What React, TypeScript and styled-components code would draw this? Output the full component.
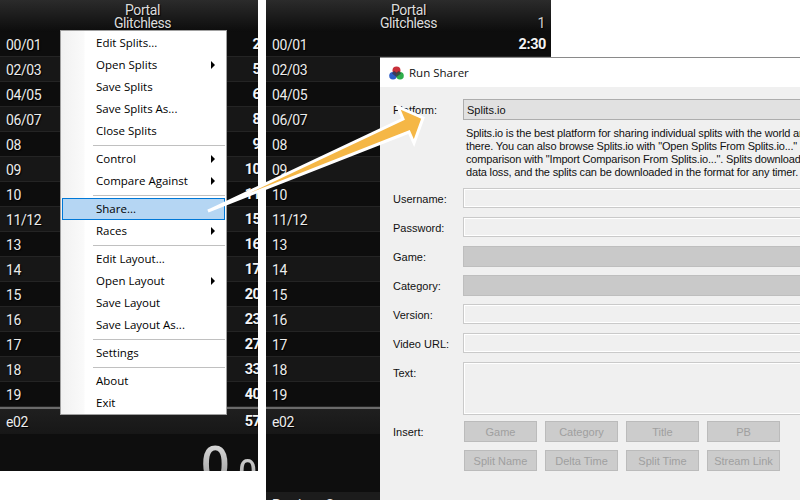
import React from 'react';
import styled, { createGlobalStyle } from 'styled-components';

const GlobalStyle = createGlobalStyle`
  html, body {
    margin: 0;
    padding: 0;
    background: #fff;
  }
`;

const segments: [string, string][] = [
  ['00/01', '2:30'],
  ['02/03', '5:12'],
  ['04/05', '6:48'],
  ['06/07', '8:21'],
  ['08', '9:40'],
  ['09', '10:15'],
  ['10', '11:32'],
  ['11/12', '15:03'],
  ['13', '16:27'],
  ['14', '17:44'],
  ['15', '20:09'],
  ['16', '23:18'],
  ['17', '27:36'],
  ['18', '33:51'],
  ['19', '40:22'],
];

type MenuEntry = { label: string; sub?: boolean; active?: boolean };

const menuGroups: MenuEntry[][] = [
  [
    { label: 'Edit Splits...' },
    { label: 'Open Splits', sub: true },
    { label: 'Save Splits' },
    { label: 'Save Splits As...' },
    { label: 'Close Splits' },
  ],
  [{ label: 'Control', sub: true }, { label: 'Compare Against', sub: true }],
  [{ label: 'Share...', active: true }, { label: 'Races', sub: true }],
  [
    { label: 'Edit Layout...' },
    { label: 'Open Layout', sub: true },
    { label: 'Save Layout' },
    { label: 'Save Layout As...' },
  ],
  [{ label: 'Settings' }],
  [{ label: 'About' }, { label: 'Exit' }],
];

// the right copy sits behind the dialog, so only what shows around it is rendered
const SplitsPanel: React.FC<{ behindDialog?: boolean }> = ({ behindDialog }) => (
  <Splits>
    <Title>
      <TitleLine>Portal</TitleLine>
      <TitleLine>Glitchless</TitleLine>
      {behindDialog && <Attempts>1</Attempts>}
    </Title>
    {segments.map(([name, time], i) => (
      <Row key={name} $alt={i % 2 === 1}>
        <span>{name}</span>
        {(!behindDialog || i === 0) && <Time>{time}</Time>}
      </Row>
    ))}
    <FinalRow>
      <span>e02</span>
      {!behindDialog && <Time>57:06</Time>}
    </FinalRow>
    <Timer>
      {!behindDialog && (
        <>
          <BigDigit>0</BigDigit>
          <SmallDigits>.00</SmallDigits>
        </>
      )}
    </Timer>
    <Footer>Previous Segment</Footer>
  </Splits>
);

const SharerIcon: React.FC = () => (
  <svg width="15" height="14" viewBox="0 0 15 14">
    <circle cx="7.5" cy="4.5" r="4" fill="#c8303a" />
    <circle cx="4" cy="9.8" r="3.8" fill="#2f5fc8" />
    <circle cx="11" cy="9.8" r="3.8" fill="#2fae4a" />
    <path d="M7.5 6.5 L5 4.8 L3 7.5 L7.5 11 L12 7.5 L10 4.8 Z" fill="#3a3040" opacity="0.75" />
  </svg>
);

const labelledFields: { label: string; disabled?: boolean }[] = [
  { label: 'Username:' },
  { label: 'Password:' },
  { label: 'Game:', disabled: true },
  { label: 'Category:', disabled: true },
  { label: 'Version:' },
  { label: 'Video URL:' },
];

const insertButtons = ['Game', 'Category', 'Title', 'PB', 'Split Name', 'Delta Time', 'Split Time', 'Stream Link'];

const App: React.FC = () => (
  <Page>
    <GlobalStyle />
    <LeftWindow>
      <SplitsPanel />
    </LeftWindow>
    <RightWindow>
      <SplitsPanel behindDialog />
    </RightWindow>

    <Menu>
      {menuGroups.map((group, i) => (
        <React.Fragment key={i}>
          {i > 0 && <MenuSeparator />}
          {group.map(item => (
            <MenuItem key={item.label} $active={item.active}>
              {item.label}
              {item.sub && <SubArrow />}
            </MenuItem>
          ))}
        </React.Fragment>
      ))}
    </Menu>

    <Dialog>
      <DialogTitle>
        <SharerIcon />
        <span>Run Sharer</span>
      </DialogTitle>
      <DialogBody>
        <PlatformRow>
          <Label>Platform:</Label>
          <PlatformSelect>Splits.io</PlatformSelect>
        </PlatformRow>
        <Description>
          Splits.io is the best platform for sharing individual splits with the world an
          <br />
          there. You can also browse Splits.io with "Open Splits From Splits.io..." a
          <br />
          comparison with "Import Comparison From Splits.io...". Splits downloaded
          <br />
          data loss, and the splits can be downloaded in the format for any timer.
        </Description>
        {labelledFields.map(f => (
          <FieldRow key={f.label}>
            <Label>{f.label}</Label>
            <Field $disabled={f.disabled} />
          </FieldRow>
        ))}
        <TextRow>
          <Label>Text:</Label>
          <TextArea />
        </TextRow>
        <InsertRow>
          <InsertLabel>Insert:</InsertLabel>
          <InsertGrid>
            {insertButtons.map(b => (
              <InsertButton key={b}>{b}</InsertButton>
            ))}
          </InsertGrid>
        </InsertRow>
      </DialogBody>
    </Dialog>

    <ArrowOverlay width="800" height="500" viewBox="0 0 800 500">
      <polygon
        points="208,211 403,119 398,107 423,118 414,143 409,132"
        fill="#f5b746"
        stroke="#fff"
        strokeWidth="3"
        strokeLinejoin="miter"
      />
    </ArrowOverlay>
  </Page>
);

const Page = styled.div`
  position: relative;
  display: flex;
  align-items: flex-start;
  gap: 8px;
  width: 800px;
  height: 500px;
  overflow: hidden;
  background: #fff;
`;

const LeftWindow = styled.div`
  width: 258px;
  height: 471px;
  overflow: hidden;
`;

const RightWindow = styled.div`
  width: 285px;
  height: 500px;
  overflow: hidden;
`;

const Splits = styled.div`
  width: 285px;
  height: 500px;
  background: #0e0e0e;
  color: #ececec;
  font-family: Roboto, sans-serif;
  font-size: 14px;
  letter-spacing: -0.4px;
  text-shadow: 1px 1px 1px #000;
`;

const Title = styled.div`
  position: relative;
  height: 32px;
  box-sizing: border-box;
  padding-top: 4px;
  text-align: center;
  background: linear-gradient(#2b2b2b, #0c0c0c);
`;

const TitleLine = styled.div`
  font-size: 14px;
  line-height: 13px;
  color: #dcdcdc;
`;

const Attempts = styled.span`
  position: absolute;
  right: 6px;
  top: 17px;
  font-size: 14px;
  line-height: 13px;
  color: #cfcfcf;
`;

const Row = styled.div<{ $alt?: boolean }>`
  display: flex;
  align-items: center;
  justify-content: space-between;
  box-sizing: border-box;
  height: 25px;
  padding: 1px 5px 0 6px;
  border-bottom: 1px solid #242424;
  background: ${props => (props.$alt ? '#171717' : '#0d0d0d')};
`;

const FinalRow = styled(Row)`
  height: 27px;
  padding-top: 0;
  border-top: 2px solid #6a6a6a;
  border-bottom: none;
  background: linear-gradient(#1f1f1f, #171717);
`;

const Time = styled.span`
  font-size: 14.5px;
  font-weight: 700;
  color: #f4f4f4;
`;

const Timer = styled.div`
  display: flex;
  align-items: baseline;
  justify-content: flex-end;
  box-sizing: border-box;
  height: 58px;
  padding: 0 10px 0 0;
  background: #0e0e0e;
  font-family: 'Open Sans', sans-serif;
  letter-spacing: 0;
  line-height: 58px;
  text-shadow: none;
`;

const BigDigit = styled.span`
  font-size: 50px;
  font-weight: 600;
  background: linear-gradient(#e8e8e8, #8e8e8e);
  -webkit-background-clip: text;
  background-clip: text;
  color: transparent;
`;

const SmallDigits = styled(BigDigit)`
  font-size: 32px;
`;

const Footer = styled.div`
  height: 25px;
  box-sizing: border-box;
  padding: 3px 6px 0;
  line-height: 20px;
  background: #1c1c1c;
`;

const Menu = styled.div`
  position: absolute;
  left: 60px;
  top: 30px;
  box-sizing: border-box;
  width: 167px;
  height: 385px;
  padding: 1px;
  border: 1px solid #a0a0a0;
  background: linear-gradient(to right, #f1f1f1 0, #fafafa 23px, #fff 24px);
  font-family: 'Open Sans', sans-serif;
  font-size: 11.5px;
  color: #000;
`;

const MenuItem = styled.div<{ $active?: boolean }>`
  position: relative;
  box-sizing: border-box;
  height: 22px;
  padding-left: 33px;
  line-height: 20px;
  border: 1px solid ${props => (props.$active ? '#0078d7' : 'transparent')};
  background: ${props => (props.$active ? '#b5d6f3' : 'transparent')};
`;

const SubArrow = styled.i`
  position: absolute;
  right: 9px;
  top: 6px;
  border-left: 4px solid #000;
  border-top: 4px solid transparent;
  border-bottom: 4px solid transparent;
`;

const MenuSeparator = styled.div`
  height: 1px;
  margin: 3px 0 2px 31px;
  background: #c0c0c0;
`;

const Dialog = styled.div`
  position: absolute;
  left: 380px;
  top: 57px;
  width: 420px;
  height: 443px;
  overflow: hidden;
  border-top: 1px solid #8a8a8a;
  background: #f0f0f0;
  font-family: 'Liberation Sans', sans-serif;
  font-size: 11px;
  color: #111;
`;

const DialogTitle = styled.div`
  display: flex;
  align-items: center;
  gap: 5px;
  height: 29px;
  padding-left: 9px;
  background: #fff;
  font-family: 'Open Sans', sans-serif;
  font-size: 11.5px;
`;

const DialogBody = styled.div`
  width: 520px;
  padding: 12px 0 0 13px;
`;

const FieldRow = styled.div`
  display: flex;
  align-items: flex-start;
  height: 29px;
`;

const Label = styled.div`
  flex: none;
  width: 70px;
  padding-top: 1px;
  line-height: 20px;
`;

const PlatformRow = styled(FieldRow)`
  height: 21px;
`;

const PlatformSelect = styled.div`
  flex: 1;
  box-sizing: border-box;
  height: 21px;
  padding-left: 3px;
  line-height: 20px;
  border: 1px solid #adadad;
  background: #e1e1e1;
`;

const Description = styled.div`
  height: 68px;
  box-sizing: border-box;
  padding: 7px 0 0 73px;
  line-height: 13px;
  letter-spacing: -0.17px;
  white-space: nowrap;
`;

const Field = styled.div<{ $disabled?: boolean }>`
  flex: 1;
  box-sizing: border-box;
  height: ${props => (props.$disabled ? '21px' : '20px')};
  border: 1px solid ${props => (props.$disabled ? '#bebebe' : '#cacaca')};
  background: ${props => (props.$disabled ? '#c9c9c9' : '#f0f0f0')};
  box-shadow: ${props => (props.$disabled ? 'none' : 'inset 0 0 0 1px #fff')};
`;

const TextRow = styled(FieldRow)`
  height: 59px;
`;

const TextArea = styled(Field)`
  height: 53px;
`;

const InsertRow = styled(FieldRow)`
  height: auto;
`;

const InsertLabel = styled(Label)`
  width: 71px;
`;

const InsertGrid = styled.div`
  display: grid;
  grid-template-columns: repeat(4, 73px);
  gap: 8px;
`;

const InsertButton = styled.div`
  box-sizing: border-box;
  height: 21px;
  line-height: 20px;
  text-align: center;
  border: 1px solid #bbb;
  background: #ccc;
  color: #9f9f9f;
`;

const ArrowOverlay = styled.svg`
  position: absolute;
  left: 0;
  top: 0;
  pointer-events: none;
`;

export default App;
